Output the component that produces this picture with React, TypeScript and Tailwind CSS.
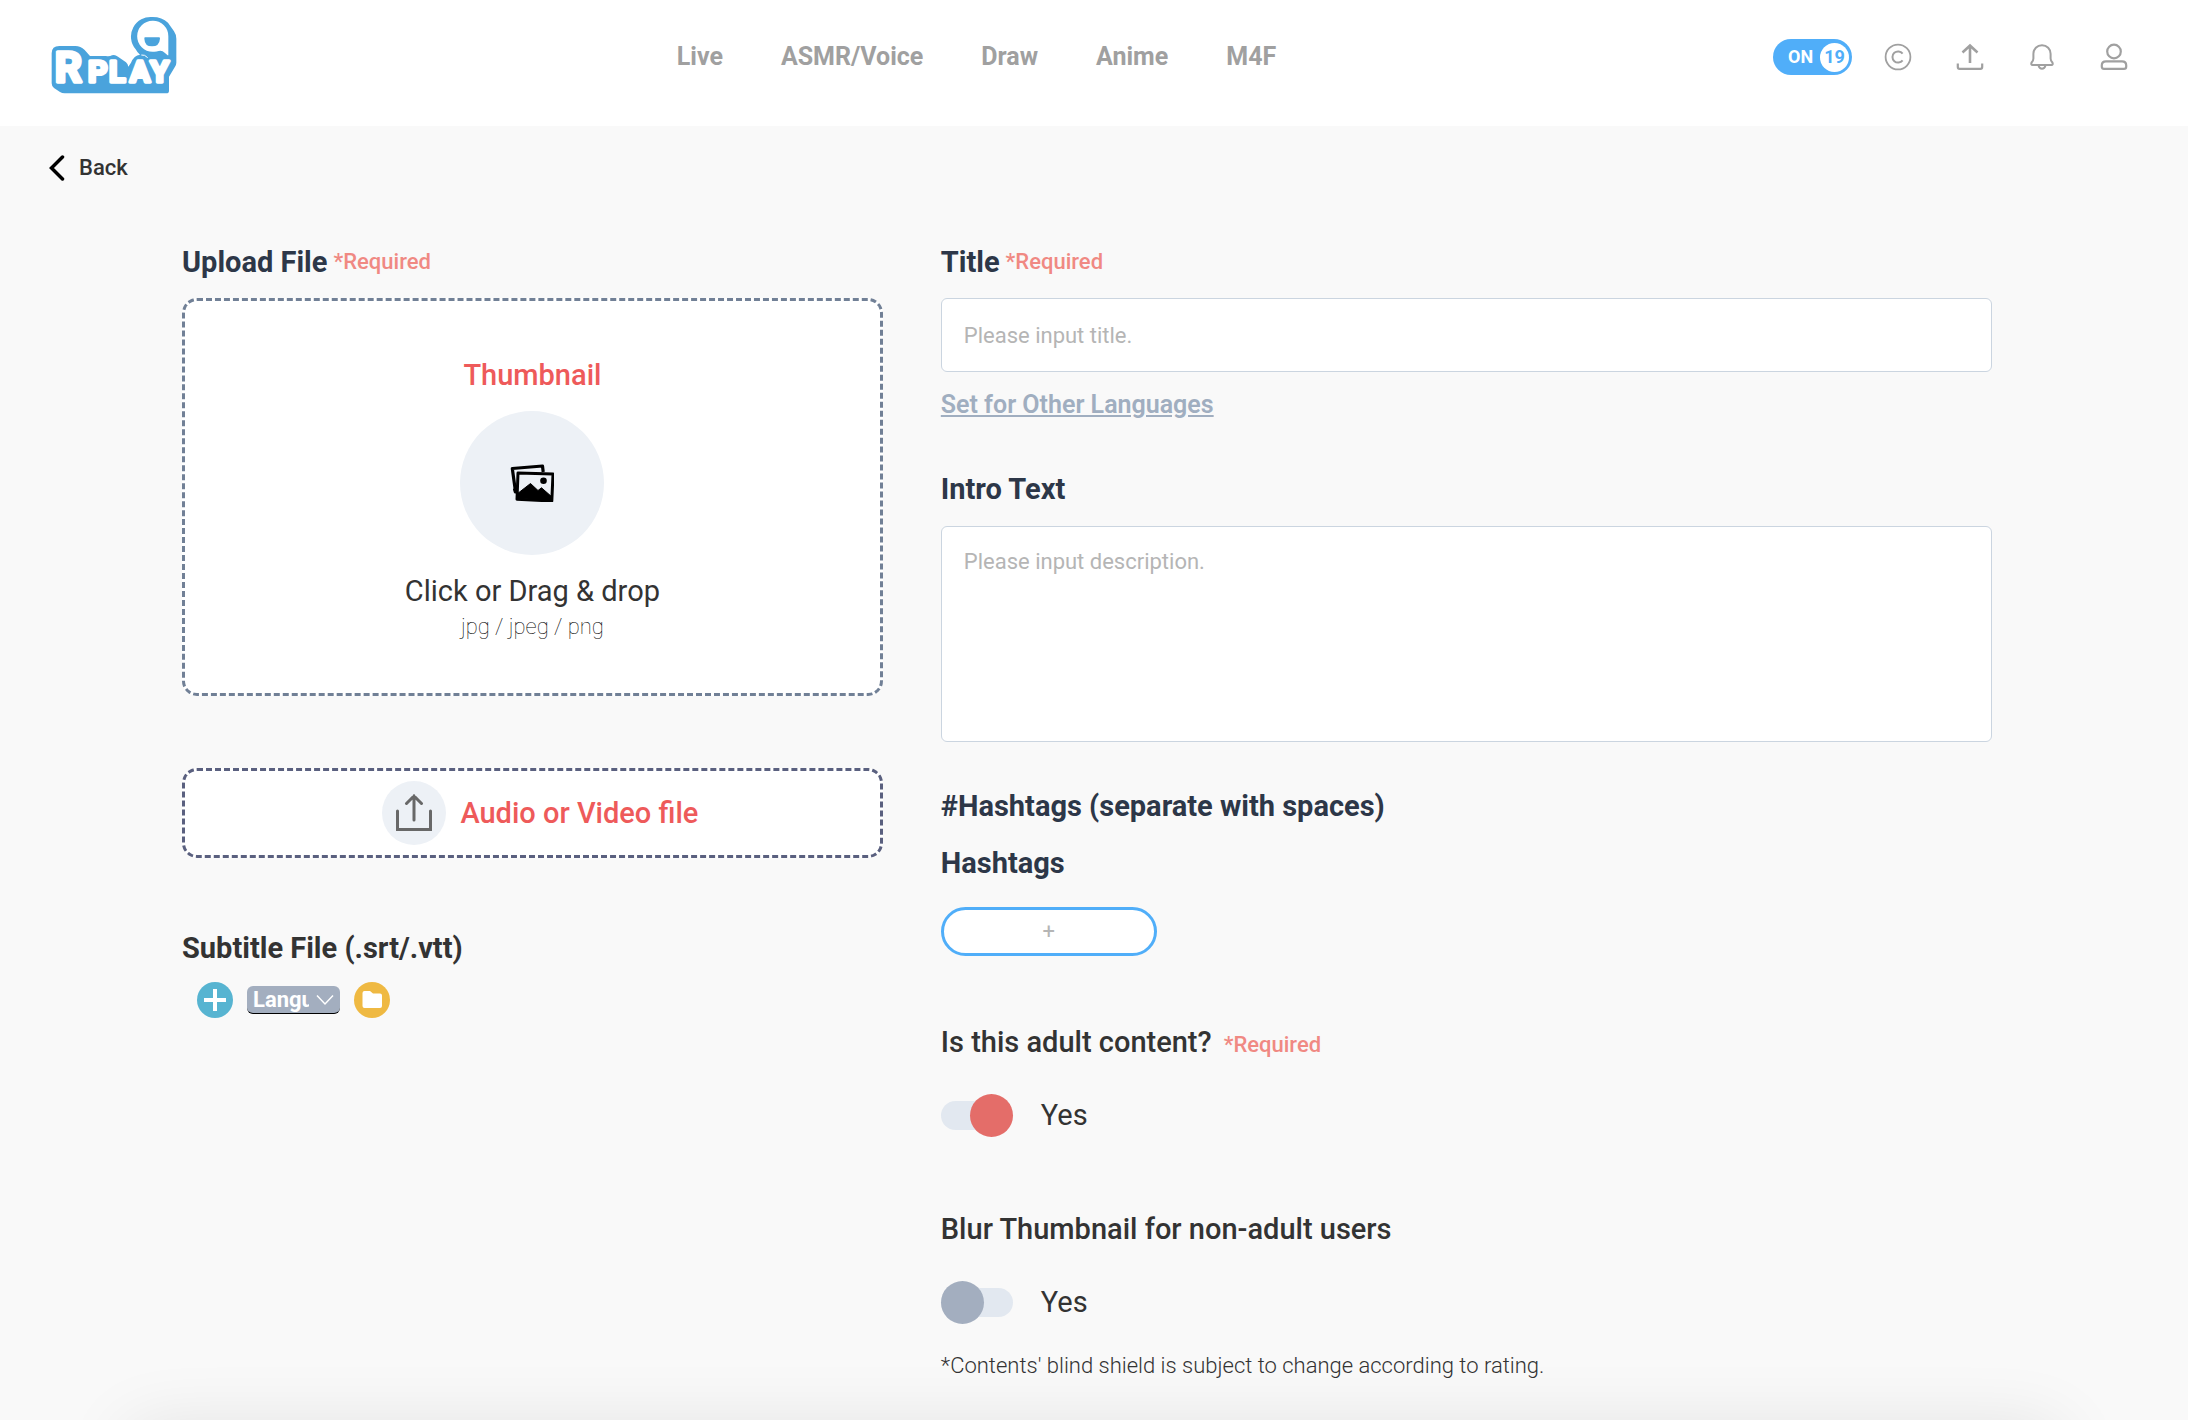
import type { ReactNode } from 'react';

const NAV_LINKS = ['Live', 'ASMR/Voice', 'Draw', 'Anime', 'M4F'];

function Logo() {
  return (
    <svg viewBox="54 48 396 246" className="h-[82px] w-[132px]" role="img" aria-label="RPLAY">
      <path
        fill="#4aa3dc"
        d="M65 160Q65 138 88 138H136Q152 138 164 150L180 168H228Q238 170 246 166Q254 162 264 170L288 187Q294 192 295 200L303 188Q312 166 330 164Q322 158 317 148A59 59 0 0 1 368 51Q396 51 414 68L432 94Q439 104 439 116V188Q439 194 435 200L417 230V272Q417 280 409 280H104Q96 280 90 276L72 264Q65 259 65 250Z"
      />
      <path
        fill="#fff"
        d="M368 62A46 46 0 0 1 415 109V164Q415 168 412 165L404 158Q396 150 386 153Q378 156 368 155A46 46 0 0 1 368 62Z"
      />
      <path fill="#4aa3dc" d="M345 112H387Q390 112 390 116Q388 139 366 139Q344 139 343 116Q343 112 345 112Z" />
      <path fill="none" stroke="#fff" strokeWidth="3" d="M334 165Q344 163 353 173" />
      <g
        fill="#fff"
        stroke="#fff"
        strokeWidth="10"
        strokeLinejoin="round"
        fontFamily="Roboto, sans-serif"
        fontWeight="700"
      >
        <text x="74" y="245" fontSize="128">
          R
        </text>
        <text x="174 237 299 361" y="245" fontSize="91">
          PLAY
        </text>
      </g>
    </svg>
  );
}

function CopyrightIcon() {
  return (
    <svg viewBox="0 0 28 28" className="size-7" fill="none" stroke="#a0a0a0" strokeWidth="2">
      <circle cx="14" cy="14" r="12.4" strokeWidth="1.8" />
      <path d="M18.6 10.7A5.6 5.6 0 1 0 18.6 17.3" />
    </svg>
  );
}

function UploadIcon() {
  return (
    <svg viewBox="0 0 28 28" className="size-7" fill="none" stroke="#a0a0a0" strokeWidth="2.2">
      <path d="M14 20V3M6.500 9.500L14 2.500L21.500 9.500" strokeWidth="2.600" />
      <path d="M1.800 20.500V24Q1.800 25.800 3.600 25.800H24.400Q26.200 25.800 26.200 24V20.500" />
    </svg>
  );
}

function BellIcon() {
  return (
    <svg viewBox="0 0 28 28" className="size-7" fill="none" stroke="#a0a0a0" strokeWidth="2" strokeLinejoin="round">
      <path d="M14 2.200C9 2.200 5.400 6 5.400 10.800V15.500Q5.400 17.500 3.600 19.500Q2.600 21.800 4.600 21.900H23.400Q25.400 21.800 24.400 19.500Q22.600 17.500 22.600 15.500V10.800C22.600 6 19 2.200 14 2.200Z" />
      <path d="M10.400 22.200Q11.500 25.800 14 25.800Q16.500 25.800 17.600 22.200" />
    </svg>
  );
}

function UserIcon() {
  return (
    <svg viewBox="0 0 28 28" className="size-7" fill="none" stroke="#a0a0a0" strokeWidth="2.200">
      <circle cx="14" cy="8.500" r="6.800" />
      <path d="M6 18.300H22Q26.200 18.300 26.200 22.300V23.800Q26.200 25.900 24 25.900H4Q1.800 25.900 1.800 23.800V22.300Q1.800 18.300 6 18.300Z" />
    </svg>
  );
}

function PicturesIcon() {
  return (
    <svg viewBox="0 0 44 38" className="h-[38px] w-11" fill="none" stroke="#000" strokeLinejoin="round">
      <path d="M5.500 27.500L2.300 4.500L32.500 2L33.200 8" strokeWidth="3.200" />
      <path d="M8 9L43 10L41.800 37L7 35.300Z" strokeWidth="3" />
      <path d="M3.500 25L7 22.500V29H4.500Z" fill="#000" strokeWidth="1" />
      <path d="M7 34V30L20.500 19.500L28 26.500L31.500 23.800L42 33V37Z" fill="#000" strokeWidth="1" />
      <circle cx="33.500" cy="16.700" r="3.300" fill="#000" stroke="none" />
    </svg>
  );
}

function Heading({ children, required }: { children: ReactNode; required?: boolean }) {
  return (
    <div className="flex items-center gap-1.5">
      <h2 className="text-[29px] leading-10 font-bold text-[#2d3748]">{children}</h2>
      {required && <Required />}
    </div>
  );
}

function Required() {
  return <span className="text-[22px] leading-8 font-medium text-[#f08983]">*Required</span>;
}

function Toggle({ label, defaultChecked }: { label: string; defaultChecked?: boolean }) {
  return (
    <label className="relative mt-[33px] flex w-fit cursor-pointer items-center gap-7">
      <input type="checkbox" role="switch" defaultChecked={defaultChecked} className="peer sr-only" />
      <span className="flex h-[29px] w-[72px] items-center rounded-full bg-[#e2e8f0] peer-checked:justify-end peer-checked:[&>span]:bg-[#e46d69]">
        <span className="size-[43px] shrink-0 rounded-full bg-[#a3aebf]" />
      </span>
      <span className="text-[29px] leading-10 text-[#333]">{label}</span>
    </label>
  );
}

function Header() {
  return (
    <header className="flex items-center justify-between bg-white pt-4 pr-[60px] pb-7 pl-12">
      <a href="#home">
        <Logo />
      </a>
      <nav className="flex gap-[58px]">
        {NAV_LINKS.map((name) => (
          <a key={name} href="#browse" className="text-[25px] leading-9 font-bold text-[#a0a0a0]">
            {name}
          </a>
        ))}
      </nav>
      <div className="flex items-center gap-11">
        <button
          type="button"
          aria-pressed="true"
          className="-mr-3 flex h-9 w-[79px] items-center justify-between rounded-full bg-[#50aef9] pr-[3px] pl-[15px] text-lg font-bold text-white"
        >
          ON
          <span className="flex size-[29px] items-center justify-center rounded-full bg-white text-lg text-[#50aef9]">19</span>
        </button>
        <button type="button" aria-label="Coins">
          <CopyrightIcon />
        </button>
        <button type="button" aria-label="Upload">
          <UploadIcon />
        </button>
        <button type="button" aria-label="Notifications">
          <BellIcon />
        </button>
        <button type="button" aria-label="Account">
          <UserIcon />
        </button>
      </div>
    </header>
  );
}

function UploadColumn() {
  return (
    <section>
      <Heading required>Upload File</Heading>
      <label className="relative mt-4 flex cursor-pointer flex-col items-center rounded-[15px] border-3 border-dashed border-[#718096] bg-white pt-[54px] pb-[50px]">
        <input type="file" accept=".jpg,.jpeg,.png" className="sr-only" />
        <span className="text-[29px] leading-10 font-medium text-[#ee5a5a]">Thumbnail</span>
        <span className="mt-4 flex size-36 items-center justify-center rounded-full bg-[#edf1f6]">
          <PicturesIcon />
        </span>
        <span className="mt-4 text-[29px] leading-10 text-[#333]">Click or Drag &amp; drop</span>
        <span className="text-[22px] leading-8 font-thin text-black">jpg / jpeg / png</span>
      </label>

      <label className="relative mt-[72px] flex cursor-pointer items-center justify-center gap-3.5 rounded-[15px] border-3 border-dashed border-[#5a607f] bg-white py-2.5 pl-4">
        <input type="file" accept="audio/*,video/*" className="sr-only" />
        <span className="flex size-16 items-center justify-center rounded-full bg-[#edf1f6]">
          <svg viewBox="0 0 36 38" className="h-[38px] w-9" fill="none" stroke="#686868" strokeWidth="3">
            <path d="M1.500 17V35.500H34.500V17" strokeLinecap="round" />
            <path d="M18 26V2M10.500 9.500L18 2L25.500 9.500" strokeLinecap="round" />
          </svg>
        </span>
        <span className="text-[29px] leading-10 font-medium text-[#ee5a5a]">Audio or Video file</span>
      </label>

      <h2 className="mt-[70px] text-[29px] leading-10 font-bold text-[#333]">Subtitle File (.srt/.vtt)</h2>
      <div className="mt-3.5 flex items-center gap-3.5 pl-[15px]">
        <button type="button" aria-label="Add subtitle" className="size-9 rounded-full bg-[#57b4d1]">
          <svg viewBox="0 0 36 36" stroke="#fff" strokeWidth="4">
            <path d="M18 7V29M7 18H29" />
          </svg>
        </button>
        <div className="relative">
          <select
            aria-label="Language"
            className="block h-7 w-[93px] appearance-none rounded-md border-b border-black bg-[#a3aebf] pr-[31px] pl-1.5 text-[22px] leading-[27px] font-bold text-white"
          >
            <option>Language</option>
          </select>
          <svg
            viewBox="0 0 18 12"
            className="pointer-events-none absolute top-2 right-1.5 h-3 w-[18px]"
            fill="none"
            stroke="#fff"
            strokeWidth="1.500"
          >
            <path d="M1 1.500L9 10L17 1.500" />
          </svg>
        </div>
        <button type="button" aria-label="Choose subtitle file" className="size-9 rounded-full bg-[#efb942]">
          <svg viewBox="0 0 36 36" fill="#fff">
            <path d="M8.500 11Q8.500 9 10.500 9H16L19 11.500H26Q28 11.500 28 13.500V24Q28 26 26 26H10.500Q8.500 26 8.500 24Z" />
          </svg>
        </button>
      </div>
    </section>
  );
}

function DetailsColumn() {
  return (
    <section>
      <Heading required>
        <label htmlFor="title">Title</label>
      </Heading>
      <input
        id="title"
        type="text"
        placeholder="Please input title."
        className="mt-4 block h-[74px] w-full rounded-md border border-[#cbd5e0] bg-white px-[22px] text-[22px] placeholder:text-[#b5b5b5]"
      />
      <a href="#languages" className="mt-[15px] block w-fit text-[25px] leading-9 font-semibold text-[#a0aec0] underline">
        Set for Other Languages
      </a>

      <div className="mt-[46px]">
        <Heading>
          <label htmlFor="intro">Intro Text</label>
        </Heading>
      </div>
      <textarea
        id="intro"
        placeholder="Please input description."
        className="mt-[17px] block h-[216px] w-full resize-none rounded-md border border-[#cbd5e0] bg-white px-[22px] py-[19px] text-[22px] leading-8 placeholder:text-[#b5b5b5]"
      />

      <div className="mt-11 flex flex-col gap-[17px]">
        <Heading>#Hashtags (separate with spaces)</Heading>
        <Heading>
          <label htmlFor="hashtags">Hashtags</label>
        </Heading>
      </div>
      <input
        id="hashtags"
        type="text"
        placeholder="+"
        className="mt-6 block h-[49px] w-[216px] rounded-full border-3 border-[#50aef9] bg-white px-4 text-center text-[22px] placeholder:text-[#b5b5b5]"
      />

      <div className="mt-[66px] flex items-baseline gap-3">
        <h2 className="text-[29px] leading-10 font-medium text-[#333]">Is this adult content?</h2>
        <Required />
      </div>
      <Toggle label="Yes" defaultChecked />

      <h2 className="mt-[74px] text-[29px] leading-10 font-medium text-[#333]">Blur Thumbnail for non-adult users</h2>
      <Toggle label="Yes" />
      <p className="mt-7 text-[22px] leading-8 font-light text-[#333]">
        *Contents' blind shield is subject to change according to rating.
      </p>
    </section>
  );
}

export default function App() {
  return (
    <div className="relative min-h-screen overflow-hidden bg-[#f9f9f9] font-[Roboto,sans-serif]">
      <Header />
      <a href="#back" className="mt-7 ml-12 flex w-fit items-center gap-3.5 text-[22px] leading-7 font-medium text-[#333]">
        <svg viewBox="0 0 17 26" className="h-[26px] w-[17px]" fill="none" stroke="#000" strokeWidth="3.500">
          <path d="M14.500 2L3.500 13L14.500 24" strokeLinecap="round" />
        </svg>
        Back
      </a>
      <main className="mt-[60px] grid grid-cols-[2fr_3fr] gap-[58px] pr-[196px] pb-9 pl-[182px]">
        <UploadColumn />
        <DetailsColumn />
      </main>
      <div className="pointer-events-none absolute inset-x-[130px] -bottom-[90px] h-20 shadow-[0_0_72px_rgba(0,0,0,0.11)]" />
    </div>
  );
}
